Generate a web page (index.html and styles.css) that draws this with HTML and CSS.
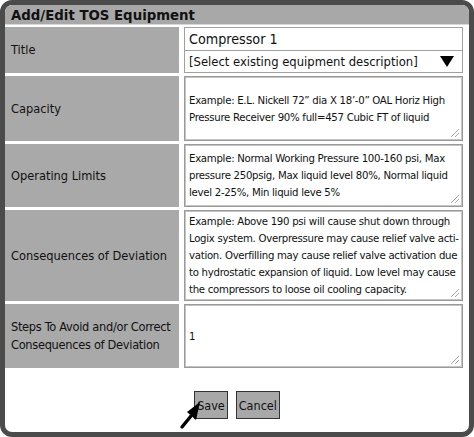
FILE: index.html
```html
<!DOCTYPE html>
<html>
<head>
<meta charset="utf-8">
<link rel="stylesheet" href="styles.css">
</head>
<body>
<div class="frame">
  <div class="header">Add/Edit TOS Equipment</div>
  <div class="form">
    <div class="label">Title</div>
    <div class="field-stack">
      <div class="input">Compressor 1</div>
      <div class="select"><span>[Select existing equipment description]</span><svg class="caret" width="14" height="11" viewBox="0 0 14 11"><path d="M0 0H14L7 11Z" fill="#000"/></svg></div>
    </div>

    <div class="label">Capacity</div>
    <div class="area">
      <div class="text">Example: E.L. Nickell 72” dia X 18’-0” OAL Horiz High<br>Pressure Receiver 90% full=457 Cubic FT of liquid</div>
      <svg class="grip" width="10" height="10" viewBox="0 0 10 10"><path d="M9 1L1 9M9 5L5 9" stroke="#aaa" stroke-width="1"/></svg>
    </div>

    <div class="label">Operating Limits</div>
    <div class="area">
      <div class="text">Example: Normal Working Pressure 100-160 psi, Max<br>pressure 250psig, Max liquid level 80%, Normal liquid<br>level 2-25%, Min liquid leve 5%</div>
      <svg class="grip" width="10" height="10" viewBox="0 0 10 10"><path d="M9 1L1 9M9 5L5 9" stroke="#aaa" stroke-width="1"/></svg>
    </div>

    <div class="label">Consequences of Deviation</div>
    <div class="area">
      <div class="text">Example: Above 190 psi will cause shut down through<br>Logix system. Overpressure may cause relief valve acti-<br>vation. Overfilling may cause relief valve activation due<br>to hydrostatic expansion of liquid. Low level may cause<br>the compressors to loose oil cooling capacity.</div>
      <svg class="grip" width="10" height="10" viewBox="0 0 10 10"><path d="M9 1L1 9M9 5L5 9" stroke="#aaa" stroke-width="1"/></svg>
    </div>

    <div class="label nowrap">Steps To Avoid and/or Correct<br>Consequences of Deviation</div>
    <div class="area">
      <div class="text">1</div>
      <svg class="grip" width="10" height="10" viewBox="0 0 10 10"><path d="M9 1L1 9M9 5L5 9" stroke="#aaa" stroke-width="1"/></svg>
    </div>
  </div>
  <div class="actions">
    <button class="btn">Save</button>
    <button class="btn">Cancel</button>
    <svg class="cursor" width="24" height="30" viewBox="0 0 24 30"><path d="M3 27L12 16" stroke="#000" stroke-width="3.4" stroke-linecap="round"/><path d="M21 2L8 12L17 20Z" fill="#000"/></svg>
  </div>
</div>
</body>
</html>
```

FILE: styles.css
```css
html, body {
  margin: 0;
  padding: 0;
  background: #fff;
}
body {
  font-family: "DejaVu Sans Condensed", "DejaVu Sans", sans-serif;
  color: #111;
}
.frame {
  box-sizing: border-box;
  width: 474px;
  height: 437px;
  border: 5px solid #4b4b4b;
  border-radius: 12px;
  background: #fff;
  display: flex;
  flex-direction: column;
  overflow: hidden;
}
.header {
  height: 19px;
  background: #a8a8a8;
  font-weight: bold;
  font-size: 14.8px;
  line-height: 19px;
  padding-left: 6px;
  border-top-left-radius: 6px;
  border-top-right-radius: 6px;
  border-bottom: 1px solid #d8d8d8;
}
.form {
  display: grid;
  grid-template-columns: 174px 279px;
  grid-template-rows: 46px 65px 63px 91px 64px;
  column-gap: 5px;
  row-gap: 3px;
  padding-top: 2px;
}
.label {
  background: #a9a9a9;
  display: flex;
  align-items: center;
  padding-left: 6px;
  font-size: 12.7px;
  line-height: 18px;
}
.nowrap {
  white-space: nowrap;
  letter-spacing: -0.3px;
}
.field-stack {
  display: flex;
  flex-direction: column;
}
.input, .select {
  box-sizing: border-box;
  border: 1px solid #a0a0a0;
  padding-left: 4px;
  display: flex;
  align-items: center;
  white-space: nowrap;
}
.input {
  height: 24px;
  font-size: 14.2px;
}
.select {
  height: 22px;
  border-top: none;
  justify-content: space-between;
  padding-right: 8px;
  font-size: 12.9px;
}
.area {
  position: relative;
  box-sizing: border-box;
  border: 2px solid #c4c4c4;
  outline: 1px solid #9a9a9a;
  outline-offset: -1px;
  display: flex;
  align-items: center;
  padding-left: 3px;
}
.text {
  font-size: 11.3px;
  line-height: 17px;
  letter-spacing: -0.28px;
  white-space: nowrap;
}
.grip {
  position: absolute;
  right: 1px;
  bottom: 1px;
}
.actions {
  position: relative;
  display: flex;
  justify-content: center;
  gap: 8px;
  padding-top: 23px;
}
.btn {
  box-sizing: border-box;
  height: 28px;
  padding: 0 2px;
  background: #a8a8a8;
  border: 1px solid #333;
  border-radius: 0;
  font-family: "DejaVu Sans Condensed", "DejaVu Sans", sans-serif;
  font-size: 12.5px;
  color: #111;
}
.cursor {
  position: absolute;
  left: 174px;
  top: 32px;
}
```
